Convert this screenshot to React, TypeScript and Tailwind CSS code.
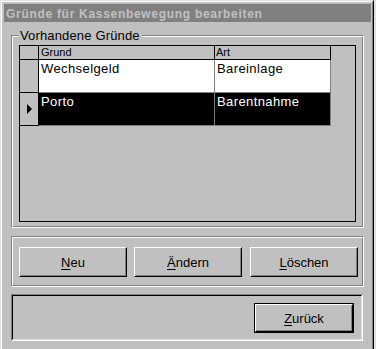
import React from "react";

const font = { fontFamily: '"Liberation Sans", Arial, sans-serif' };

function Btn({ children }: { children: React.ReactNode }) {
  return (
    <div className="w-[108px] h-[30px] border border-t-white border-l-white border-r-black border-b-black">
      <div className="w-full h-full border border-t-[#c0c0c0] border-l-[#c0c0c0] border-r-[#808080] border-b-[#808080] flex items-center justify-center text-[13px] text-black leading-[15px]">
        {children}
      </div>
    </div>
  );
}

function U({ children }: { children: React.ReactNode }) {
  return <span className="underline underline-offset-[2px]">{children}</span>;
}

export default function App() {
  return (
    <div className="w-[376px] h-[349px] overflow-hidden bg-[#dfdfdf]" style={font}>
      <div className="w-[374px] h-[360px] border border-t-[#dfdfdf] border-l-[#dfdfdf] border-r-black border-b-black">
        <div className="w-full h-full border border-t-white border-l-white border-r-[#808080] border-b-[#808080] bg-[#c0c0c0] flex flex-col">
          {/* title bar */}
          <div className="pl-[2px] pr-[1px] pt-[2px]">
            <div className="h-[18px] bg-[#808080] pl-[2px] pt-[2px]">
              <span className="block text-[12px] leading-[16px] font-bold text-[#c0c0c0] tracking-[0.7px] whitespace-nowrap">
                Gründe für Kassenbewegung bearbeiten
              </span>
            </div>
          </div>

          {/* group box */}
          <div className="ml-[9px] mt-[13px] w-[353px] h-[193px] relative border border-t-[#808080] border-l-[#808080] border-r-white border-b-white">
            <div className="w-full h-full border border-t-white border-l-white border-r-[#808080] border-b-[#808080] pl-[6px] pt-[8px]">
              {/* grid */}
              <div className="w-[337px] h-[177px] border border-black bg-[#c0c0c0] flex flex-col">
                {/* header row */}
                <div className="flex h-[14px]">
                  <div className="w-[19px] h-full border-r border-b border-black" />
                  <div className="w-[176px] h-full border-r border-b border-black pl-[2px] text-[11px] leading-[13px] text-black">
                    Grund
                  </div>
                  <div className="w-[116px] h-full border-r border-b border-black pl-[1px] text-[11px] leading-[13px] text-black">
                    Art
                  </div>
                </div>
                {/* row 1 */}
                <div className="flex h-[33px]">
                  <div className="w-[19px] h-full border-r border-b border-black" />
                  <div className="w-[176px] h-full border-r border-b border-[#808080] bg-white pl-[2px] pt-[1px] text-[13px] leading-[15px] tracking-[0.4px] text-black">
                    Wechselgeld
                  </div>
                  <div className="w-[116px] h-full border-r border-b border-[#808080] bg-white pl-[2px] pt-[1px] text-[13px] leading-[15px] tracking-[0.4px] text-black">
                    Bareinlage
                  </div>
                </div>
                {/* row 2 */}
                <div className="flex h-[33px]">
                  <div className="w-[19px] h-full border-r border-b border-black flex items-center justify-center">
                    <svg width="5" height="10" viewBox="0 0 5 10">
                      <polygon points="0,0 5,5 0,10" fill="black" />
                    </svg>
                  </div>
                  <div className="w-[176px] h-full border-r border-b border-[#808080] bg-black pl-[2px] pt-[1px] text-[13px] leading-[15px] tracking-[0.4px] text-white">
                    Porto
                  </div>
                  <div className="w-[116px] h-full border-r border-b border-[#808080] bg-black pl-[2px] pt-[1px] text-[13px] leading-[15px] tracking-[0.4px] text-white">
                    Barentnahme
                  </div>
                </div>
              </div>
            </div>
            <div className="absolute left-[6px] top-[-8px] px-[2px] bg-[#c0c0c0] text-[13px] leading-[15px] tracking-[0.15px] text-black whitespace-nowrap">
              Vorhandene Gründe
            </div>
          </div>

          {/* button panel */}
          <div className="ml-[9px] mt-[8px] w-[353px] h-[51px] border border-t-[#808080] border-l-[#808080] border-r-white border-b-white">
            <div className="w-full h-full border border-t-white border-l-white border-r-[#808080] border-b-[#808080] pl-[6px] pt-[9px] flex">
              <Btn>
                <span><U>N</U>eu</span>
              </Btn>
              <div className="ml-[7px]">
                <Btn>
                  <span><U>Ä</U>ndern</span>
                </Btn>
              </div>
              <div className="ml-[8px]">
                <Btn>
                  <span><U>L</U>öschen</span>
                </Btn>
              </div>
            </div>
          </div>

          {/* bottom panel */}
          <div className="ml-[9px] mt-[7px] w-[352px] h-[47px] border border-t-[#808080] border-l-[#808080] border-r-white border-b-white">
            <div className="w-full h-full border border-t-black border-l-black border-r-[#dfdfdf] border-b-[#dfdfdf] pt-[7px] pr-[7px] flex justify-end items-start">
              <div className="w-[100px] h-[30px] border border-black">
                <div className="w-full h-full border border-t-white border-l-white border-r-black border-b-black">
                  <div className="w-full h-full border border-t-[#c0c0c0] border-l-[#c0c0c0] border-r-[#808080] border-b-[#808080] flex items-center justify-center text-[13px] leading-[15px] text-black">
                    <span><U>Z</U>urück</span>
                  </div>
                </div>
              </div>
            </div>
          </div>
        </div>
      </div>
    </div>
  );
}
